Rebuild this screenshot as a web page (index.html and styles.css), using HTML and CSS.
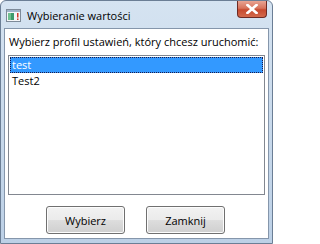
FILE: index.html
```html
<!DOCTYPE html>
<html lang="pl">
<head>
<meta charset="utf-8">
<link rel="stylesheet" href="styles.css">
</head>
<body>
<div class="window">
  <div class="titlebar">
    <svg class="app-icon" width="15" height="13" viewBox="0 0 15 13">
      <rect x="0.5" y="0.5" width="14" height="12" fill="#f4f6f8" stroke="#7d8a98"/>
      <rect x="1" y="1" width="13" height="2" fill="#9fb4c9"/>
      <rect x="2" y="4" width="6" height="7" fill="#3e9a6a"/>
      <rect x="2" y="4" width="3" height="7" fill="#6fc08f"/>
      <rect x="11" y="4" width="1.5" height="4.5" fill="#d13a2a"/>
      <rect x="11" y="9.5" width="1.5" height="1.5" fill="#d13a2a"/>
    </svg>
    <span class="title">Wybieranie wartości</span>
    <div class="close-btn">
      <svg width="12" height="10" viewBox="0 0 12 10">
        <path d="M1.5 1 L10.5 9 M10.5 1 L1.5 9" stroke="#fff" stroke-width="2.6" stroke-linecap="square" fill="none"/>
      </svg>
    </div>
  </div>
  <div class="client">
    <div class="prompt">Wybierz profil ustawień, który chcesz uruchomić:</div>
    <div class="listbox">
      <div class="item selected">test</div>
      <div class="item">Test2</div>
    </div>
    <div class="buttons">
      <div class="btn">Wybierz</div>
      <div class="btn">Zamknij</div>
    </div>
  </div>
</div>
</body>
</html>
```

FILE: styles.css
```css
html, body {
  margin: 0;
  padding: 0;
  background: #ffffff;
}
body {
  font-family: "Open Sans", "Noto Sans", "Liberation Sans", sans-serif;
  font-size: 11px;
  color: #000;
}
.window {
  width: 273px;
  height: 244px;
  box-sizing: border-box;
  border: 1px solid #6b7e95;
  border-radius: 6px 6px 0 0;
  background: linear-gradient(to bottom, #d5e3f1 0%, #bcd0e6 100%);
  display: flex;
  flex-direction: column;
}
.titlebar {
  height: 27px;
  display: flex;
  align-items: center;
  position: relative;
  padding-left: 5px;
}
.app-icon {
  margin-top: 2px;
}
.title {
  margin-left: 6px;
  margin-top: 1px;
  font-size: 11px;
  color: #000;
}
.close-btn {
  position: absolute;
  right: 5px;
  top: 0;
  width: 30px;
  height: 17px;
  box-sizing: border-box;
  border: 1px solid #6d2a24;
  border-top: none;
  border-radius: 0 0 4px 4px;
  background: linear-gradient(to bottom, #e8a493 0%, #d7735c 45%, #c74a2f 55%, #d36a4c 100%);
  display: flex;
  align-items: center;
  justify-content: center;
}
.client {
  flex: 1;
  margin: 0 3px 4px 3px;
  border: 1px solid #8596ab;
  background: #ffffff;
  display: flex;
  flex-direction: column;
  padding: 3px 3px 0 3px;
}
.prompt {
  height: 19px;
  line-height: 19px;
  padding-left: 1px;
  white-space: nowrap;
}
.listbox {
  margin-top: 4px;
  height: 140px;
  box-sizing: border-box;
  border: 1px solid #828790;
  padding: 1px;
}
.item {
  height: 16px;
  line-height: 16px;
  padding-left: 2px;
}
.item.selected {
  background: #3399ff;
  color: #fff;
  outline: 1px dotted #1a1a4a;
  outline-offset: -1px;
}
.buttons {
  display: flex;
  gap: 21px;
  margin-top: 11px;
  padding-left: 38px;
}
.btn {
  width: 79px;
  height: 28px;
  box-sizing: border-box;
  border: 1px solid #707070;
  border-radius: 3px;
  background: linear-gradient(to bottom, #f2f2f2 0%, #ebebeb 48%, #dddddd 52%, #cfcfcf 100%);
  box-shadow: inset 0 0 0 1px #fcfcfc;
  display: flex;
  align-items: center;
  justify-content: center;
}
```
